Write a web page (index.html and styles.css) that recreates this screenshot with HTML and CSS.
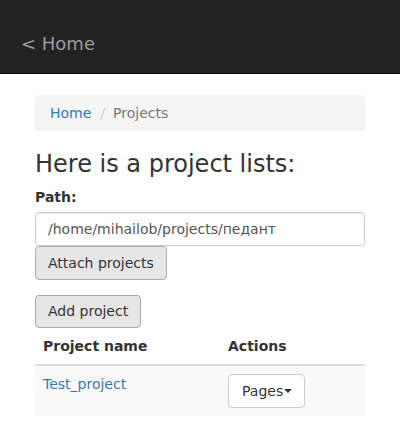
FILE: index.html
```html
<!DOCTYPE html>
<html>
<head>
<meta charset="utf-8">
<link rel="stylesheet" href="styles.css">
</head>
<body>
<nav class="navbar"><a class="brand" href="#">&lt; Home</a></nav>
<main class="container">
  <ol class="breadcrumb">
    <li><a href="#">Home</a></li>
    <li class="sep">/</li>
    <li class="active">Projects</li>
  </ol>
  <h3 class="title">Here is a project lists:</h3>
  <label class="label">Path:</label>
  <input class="input" type="text" value="/home/mihailob/projects/педант">
  <button class="btn btn-pressed">Attach projects</button>
  <button class="btn btn-pressed btn-add">Add project</button>
  <table class="table">
    <thead>
      <tr><th class="col-name">Project name</th><th>Actions</th></tr>
    </thead>
    <tbody>
      <tr>
        <td><a href="#">Test_project</a></td>
        <td><button class="btn btn-white">Pages<span class="caret"></span></button></td>
      </tr>
    </tbody>
  </table>
</main>
</body>
</html>
```
FILE: styles.css
```css
* { box-sizing: border-box; }
html, body { margin: 0; padding: 0; }
body {
  font-family: "DejaVu Sans", sans-serif;
  font-size: 14px;
  line-height: 20px;
  color: #333;
  background: #fff;
}
a { color: #337ab7; text-decoration: none; }
.navbar {
  background: #222;
  border-bottom: 1px solid #080808;
  height: 74px;
  padding: 34px 21px 0;
}
.brand {
  color: #9d9d9d;
  font-size: 18px;
  line-height: 20px;
  display: block;
}
.container {
  padding: 0 35px;
  margin-top: 21px;
}
.breadcrumb {
  list-style: none;
  margin: 0 0 20px;
  padding: 8px 15px;
  height: 36px;
  background: #f5f5f5;
  border-radius: 4px;
  display: flex;
}
.breadcrumb .sep { color: #ccc; padding: 0 5px; margin: 0 3px 0 4px; }
.breadcrumb .active { color: #777; }
.title {
  font-size: 24px;
  font-weight: 500;
  line-height: 26.4px;
  margin: 20px 0 10px;
}
.label {
  display: block;
  font-weight: bold;
  margin-bottom: 5px;
}
.input {
  display: block;
  width: 100%;
  height: 34px;
  padding: 6px 12px;
  font: inherit;
  color: #555;
  border: 1px solid #ccc;
  border-radius: 4px;
  box-shadow: inset 0 1px 1px rgba(0,0,0,.075);
  margin: 0;
}
.btn {
  display: block;
  height: 34px;
  padding: 6px 12px;
  font: inherit;
  color: #333;
  border-radius: 4px;
  margin: 0;
  cursor: pointer;
}
.btn-pressed {
  background: #e6e6e6;
  border: 1px solid #adadad;
  height: 34px;
}
.btn-add { margin-top: 15px; height: 33px; padding-top: 5px; }
.btn-white {
  background: #fff;
  border: 1px solid #ccc;
  display: inline-flex;
  align-items: center;
  padding: 6px 12px 6px 13px;
  margin-top: 0;
}
.caret {
  display: inline-block;
  width: 0;
  height: 0;
  border-top: 4px solid #333;
  border-left: 4px solid transparent;
  border-right: 4px solid transparent;
  margin-left: 1px;
}
.table {
  width: 100%;
  border-collapse: collapse;
  border-spacing: 0;
}
.table th, .table td {
  text-align: left;
  vertical-align: top;
  padding: 8px;
  line-height: 20px;
}
.table th {
  border-bottom: 2px solid #ddd;
  font-weight: bold;
}
.col-name { width: 185px; }
.table tbody tr { background: #f9f9f9; }
```
